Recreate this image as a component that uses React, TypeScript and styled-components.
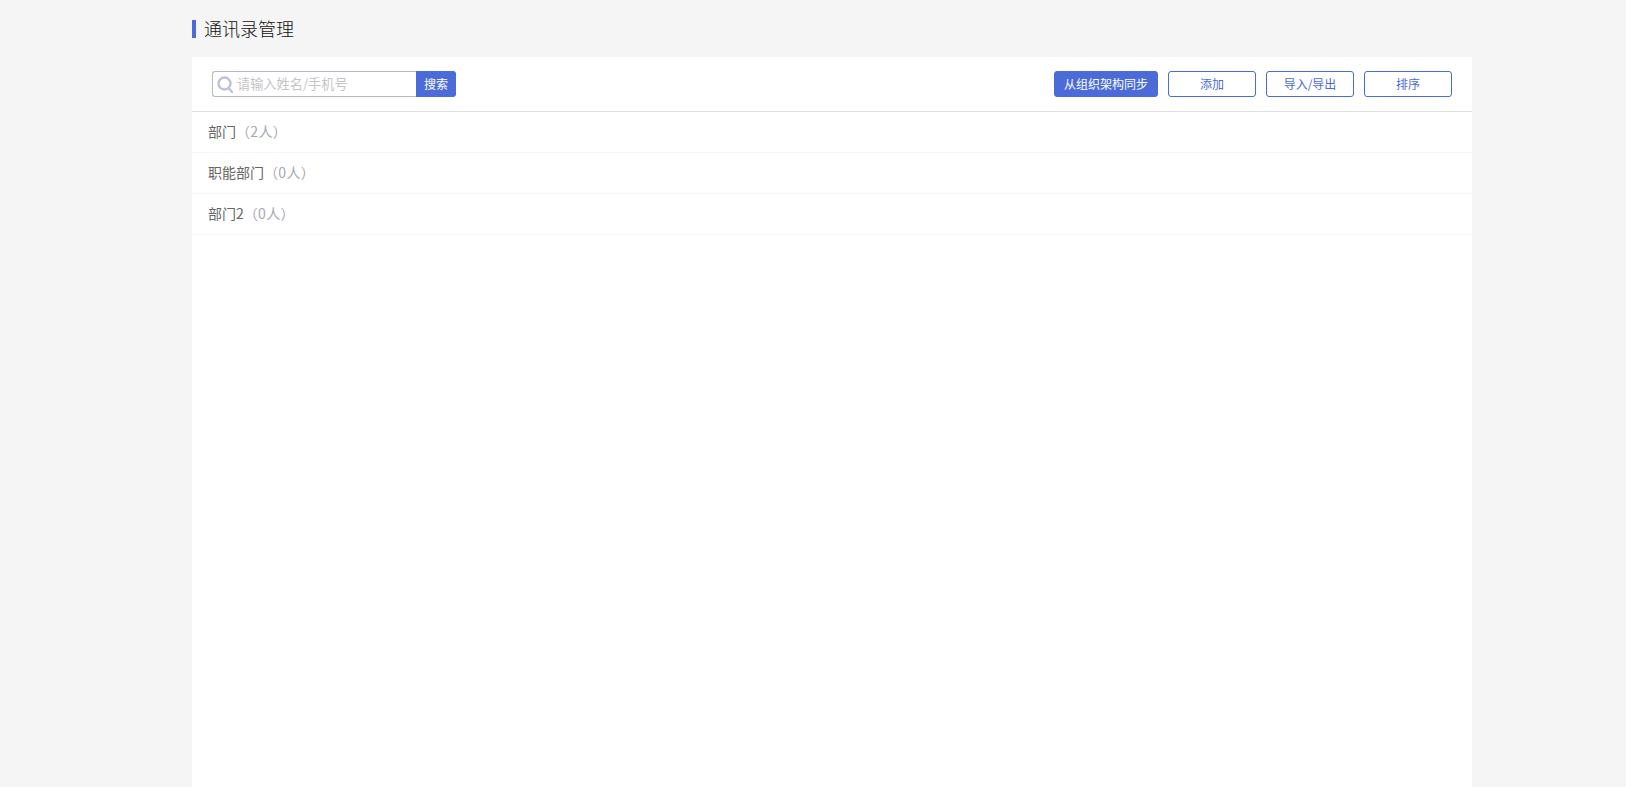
import React from "react";
import styled, { createGlobalStyle } from "styled-components";

const Global = createGlobalStyle`
  html, body { margin: 0; padding: 0; height: 100%; background: #f5f5f5; overflow: hidden; }
  body { font-family: "Noto Sans CJK SC", "Open Sans", sans-serif; }
  * { box-sizing: border-box; }
`;

const Page = styled.div`
  width: 1280px;
  height: 787px;
  margin-left: 192px;
  display: flex;
  flex-direction: column;
`;

const Header = styled.div`
  height: 57px;
  padding-top: 20px;
  flex: none;
`;

const Title = styled.h1`
  margin: 0;
  height: 18px;
  padding-left: 8px;
  border-left: 4px solid #4a6bd8;
  font-size: 18px;
  font-weight: 300;
  line-height: 16px;
  color: #111;
`;

const Panel = styled.div`
  flex: 1;
  background: #fff;
`;

const Toolbar = styled.div`
  height: 55px;
  padding: 14px 20px 0;
  display: flex;
  justify-content: space-between;
  align-items: flex-start;
  border-bottom: 1px solid #e0e0e0;
`;

const Search = styled.div`
  display: flex;
  height: 26px;
`;

const SearchField = styled.div`
  width: 204px;
  height: 26px;
  border: 1px solid #b8b8c8;
  border-right: none;
  border-radius: 3px 0 0 3px;
  padding-left: 4px;
  display: flex;
  align-items: center;
  gap: 4px;
`;

const Placeholder = styled.span`
  font-size: 13.2px;
  color: #c4c4c8;
  line-height: 24px;
  height: 24px;
  margin-top: -1px;
  white-space: nowrap;
`;

const SearchButton = styled.button`
  width: 40px;
  height: 26px;
  padding: 0 0 1px;
  border: none;
  border-radius: 0 3px 3px 0;
  background: #4a6bd8;
  color: #fff;
  font: inherit;
  font-size: 12px;
`;

const Actions = styled.div`
  display: flex;
  gap: 10px;
`;

const ActionButton = styled.button<{ $primary?: boolean }>`
  width: ${(p) => (p.$primary ? "104px" : "88px")};
  height: 26px;
  padding: 0 0 1px;
  border: 1px solid #4a6bd8;
  border-radius: 3px;
  background: ${(p) => (p.$primary ? "#4a6bd8" : "#fff")};
  color: ${(p) => (p.$primary ? "#fff" : "#4a6bd8")};
  font: inherit;
  font-size: 12px;
  line-height: 22px;
`;

const Row = styled.div`
  height: 41px;
  padding: 0 16px 3px;
  display: flex;
  align-items: center;
  border-bottom: 1px solid #f7f7f7;
  font-size: 14px;
`;

const DeptName = styled.span`
  color: #666;
`;

const Count = styled.span`
  color: #a6a8b0;
  font-size: 14px;
  letter-spacing: 0.3px;
`;

const depts = [
  { name: "部门", count: 2 },
  { name: "职能部门", count: 0 },
  { name: "部门2", count: 0 },
];

export default function App() {
  return (
    <Page>
      <Global />
      <Header>
        <Title>通讯录管理</Title>
      </Header>
      <Panel>
        <Toolbar>
          <Search>
            <SearchField>
              <svg width="16" height="17" viewBox="0 0 16 17" fill="none" stroke="#bcc2d8" strokeWidth="2.4">
                <circle cx="7.5" cy="7.5" r="6" />
                <path d="M12 12.5l3 3.5" strokeLinecap="round" />
              </svg>
              <Placeholder>请输入姓名/手机号</Placeholder>
            </SearchField>
            <SearchButton>搜索</SearchButton>
          </Search>
          <Actions>
            <ActionButton $primary>从组织架构同步</ActionButton>
            <ActionButton>添加</ActionButton>
            <ActionButton>导入/导出</ActionButton>
            <ActionButton>排序</ActionButton>
          </Actions>
        </Toolbar>
        {depts.map((d) => (
          <Row key={d.name}>
            <DeptName>{d.name}</DeptName>
            <Count>（{d.count}人）</Count>
          </Row>
        ))}
      </Panel>
    </Page>
  );
}
